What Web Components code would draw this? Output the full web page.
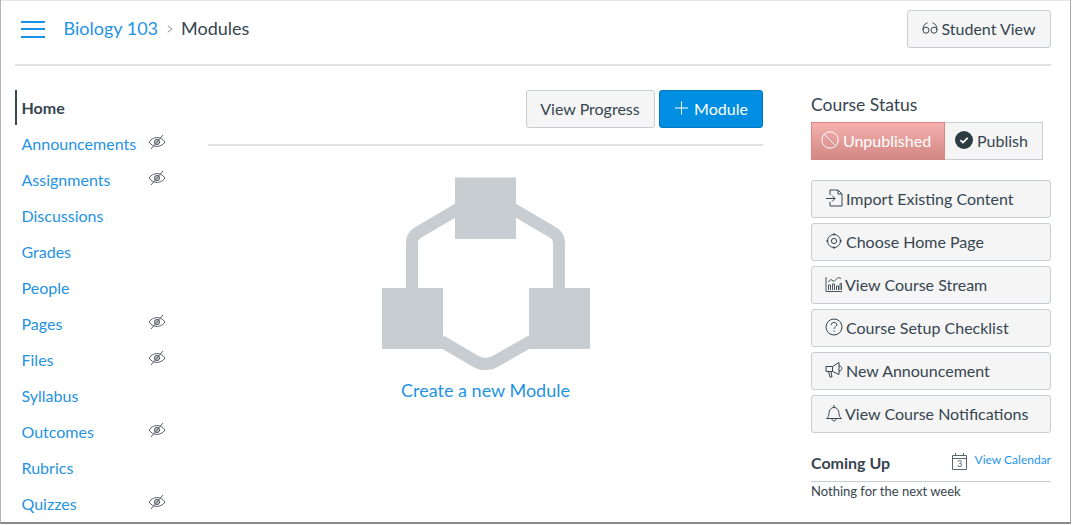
<!DOCTYPE html>
<html>
<head>
<meta charset="utf-8">
<title>Modules</title>
<style>
  html, body { margin: 0; padding: 0; background: #fff; }
  body { font-family: Lato, "Open Sans", sans-serif; color: #364550; width: 1072px; height: 525px; overflow: hidden; }
</style>
</head>
<body>
<course-window>
  <course-header></course-header>
  <div style="display:flex">
    <course-nav></course-nav>
    <modules-main></modules-main>
    <course-aside></course-aside>
  </div>
</course-window>

<script>
const icons = {
  glasses: '<svg width="16" height="12" viewBox="0 0 16 12" fill="none" stroke="currentColor" stroke-width="1"><circle cx="4" cy="8.200" r="3"/><circle cx="12" cy="8.200" r="3"/><path d="M1 8C1 4.500 2.500 1.500 5.500 .8M15 8C15 4.500 13.500 1.500 10.500 .8"/></svg>',
  eye: '<svg width="18" height="16" viewBox="0 0 18 16" fill="none" stroke="#5a6369" stroke-width="1"><path d="M1 8c2-3 5-4.400 8-4.400S15 5 17 8c-2 3-5 4.400-8 4.400S3 11 1 8z"/><circle cx="9" cy="8" r="2.600" fill="#5a6369" fill-opacity=".4"/><path d="M3 15L15 1"/></svg>',
  ban: '<svg width="18" height="18" viewBox="0 0 18 18" fill="none" stroke="currentColor" stroke-width="1"><circle cx="9" cy="9" r="8.200"/><path d="M3.200 3.200l11.600 11.600"/></svg>',
  check: '<svg width="18" height="18" viewBox="0 0 18 18"><circle cx="9" cy="9" r="9" fill="#2d3b45"/><path d="M5.400 9.200l2.500 2.400 4.800-4.800" fill="none" stroke="#fff" stroke-width="1.800"/></svg>',
  plus: '<svg width="14" height="14" viewBox="0 0 14 14" stroke="currentColor" stroke-width="1"><path d="M6.500 .5v13M0 7h13"/></svg>',
  importFile: '<svg width="18" height="18" viewBox="0 0 18 18" fill="none" stroke="currentColor" stroke-width="1"><path d="M5 6V1h8l4 4v12H5v-4"/><path d="M13 1v4h4M1 9.500h9M7 6.500l3 3-3 3"/></svg>',
  target: '<svg width="18" height="18" viewBox="0 0 18 18" fill="none" stroke="currentColor" stroke-width="1"><circle cx="9" cy="9" r="6.500"/><circle cx="9" cy="9" r="2.600"/><path d="M9 1v2.400M9 14.600V17M1 9h2.400M14.600 9H17"/></svg>',
  stream: '<svg width="18" height="18" viewBox="0 0 18 18" fill="none" stroke="currentColor" stroke-width=".9" style="margin-right:-1px"><path d="M1 2v14.500h16"/><path d="M3.500 15v-5h2v5M7.500 15V9h2v6M11.500 15v-4h2v4M15 15V8.500h1.500V15M3 7l3-2.500 3 2 4-4 3 1"/></svg>',
  help: '<svg width="18" height="18" viewBox="0 0 18 18" fill="none" stroke="currentColor" stroke-width="1"><circle cx="9" cy="9" r="8"/><path d="M6.400 7c0-1.600 1.200-2.600 2.700-2.600S11.800 5.400 11.800 6.800c0 2-2.700 2.100-2.700 4"/><path d="M9.100 12.400v1.300"/></svg>',
  megaphone: '<svg width="18" height="18" viewBox="0 0 18 18" fill="none" stroke="currentColor" stroke-width="1"><path d="M1 5.500h6.500L14 1.500v12L7.500 10.500H1z"/><path d="M14 5c1.800 0 2.800 1 2.800 2.500S15.800 10 14 10M3.500 10.500L5 16h2l-1-5.500M7.500 5.500v5"/></svg>',
  bell: '<svg width="18" height="18" viewBox="0 0 18 18" fill="none" stroke="currentColor" stroke-width="1" style="margin-right:-1px"><path d="M1.500 14.500c1.800-1.200 2.300-2.500 2.500-5 .2-3.500 2-6 5-6s4.800 2.500 5 6c.2 2.500.7 3.800 2.500 5z"/><path d="M9 1v2.500M7 14.800c0 1.200.9 2.200 2 2.200s2-1 2-2.200"/></svg>'
};

class CourseWindow extends HTMLElement {
  constructor() {
    super();
    this.attachShadow({ mode: 'open' });
    this.shadowRoot.innerHTML = `
      <style>
        :host {
          display: block;
          box-sizing: border-box;
          width: 1071px;
          height: 524px;
          background: #fff;
          border-left: 1px solid #b4b4b4;
          border-right: 1px solid #a8a8a8;
          border-bottom: 2px solid #8a8a8a;
          box-shadow: inset 0 1px 0 #e6e6e6;
          padding: 0 19px 0 14px;
          overflow: hidden;
        }
      </style>
      <slot></slot>
    `;
  }
}

class CourseHeader extends HTMLElement {
  constructor() {
    super();
    this.attachShadow({ mode: 'open' });
    this.shadowRoot.innerHTML = `
      <style>
        :host {
          display: flex;
          align-items: center;
          box-sizing: border-box;
          height: 66px;
          border-bottom: 2px solid #dfe3e6;
          padding-bottom: 6px;
        }
        .burger { width: 24px; height: 17px; margin-left: 6px; margin-right: 18.500px; display: flex; flex-direction: column; justify-content: space-between; }
        .burger i { display: block; height: 2px; background: #1a93e6; }
        nav { font-size: 18px; display: flex; align-items: center; position: relative; top: -1px; }
        a { color: #1f93e4; }
        .sep { margin: 1px 8px 0 9px; }
        .end { margin-left: auto; }
      </style>
      <div class="burger"><i></i><i></i><i></i></div>
      <nav><a>Biology 103</a><svg class="sep" width="6" height="8" viewBox="0 0 6 8" fill="none" stroke="#8a949a"><path d="M.8 .8L5 4 .8 7.200"/></svg><span>Modules</span></nav>
      <canvas-button class="end" style="width:144px">${icons.glasses}<span>Student View</span></canvas-button>
    `;
  }
}

class CanvasButton extends HTMLElement {
  constructor() {
    super();
    this.attachShadow({ mode: 'open' });
    this.shadowRoot.innerHTML = `
      <style>
        :host {
          display: inline-flex;
          align-items: center;
          justify-content: center;
          gap: 3px;
          box-sizing: border-box;
          height: 38px;
          padding-bottom: 2px;
          background: #f5f5f5;
          border: 1px solid #c7cdd1;
          border-radius: 3px;
          color: #364550;
          font-size: 16px;
          white-space: nowrap;
        }
        :host([primary]) { background: #008ee2; border-color: #0079c1; color: #fff; }
        :host([start]) { justify-content: flex-start; padding-left: 13px; }
      </style>
      <slot></slot>
    `;
  }
}

class CourseNav extends HTMLElement {
  constructor() {
    super();
    this.attachShadow({ mode: 'open' });
    const items = [
      ['Home', 0], ['Announcements', 1], ['Assignments', 1], ['Discussions', 0], ['Grades', 0], ['People', 0],
      ['Pages', 1], ['Files', 1], ['Syllabus', 0], ['Outcomes', 1], ['Rubrics', 0], ['Quizzes', 1]
    ];
    const rows = items.map(([label, hidden], i) => `
      <div class="row${i === 0 ? ' active' : ''}"><span>${label}</span>${hidden ? `<b>${icons.eye}</b>` : ''}</div>`).join('');
    this.shadowRoot.innerHTML = `
      <style>
        :host { display: block; flex: none; width: 193px; padding-top: 24px; font-size: 16px; }
        .row { position: relative; display: flex; align-items: center; height: 36px; padding: 0 0 2px 6.500px; color: #1f93e4; box-sizing: border-box; }
        .active { color: #364550; font-weight: 700; border-left: 2px solid #3a4852; padding-left: 4.500px; height: 35px; margin-bottom: 1px; padding-bottom: 1px; }
        b { position: absolute; left: 133px; top: 8px; display: block; height: 16px; }
      </style>
      ${rows}
    `;
  }
}

class ModulesMain extends HTMLElement {
  constructor() {
    super();
    this.attachShadow({ mode: 'open' });
    this.shadowRoot.innerHTML = `
      <style>
        :host { display: block; flex: none; width: 555px; padding-top: 24px; }
        .tools { display: flex; justify-content: flex-end; gap: 4px; padding-bottom: 16px; border-bottom: 2px solid #dfe3e6; }
        .empty { display: flex; flex-direction: column; align-items: center; padding-top: 31px; }
        svg { display: block; margin-left: 1px; }
        a { color: #1f93e4; font-size: 18px; line-height: 24px; }
      </style>
      <div class="tools">
        <canvas-button style="width:129px;padding-right:1px">View Progress</canvas-button>
        <canvas-button primary style="width:104px;gap:5px">${icons.plus}<span>Module</span></canvas-button>
      </div>
      <div class="empty">
        <svg width="210" height="201" viewBox="381 177 210 201">
          <g fill="none" stroke="#c7cdd1" stroke-width="12">
            <path d="M412 290V243q0-7 6-10.500L458 209"/>
            <path d="M559 290V243q0-7-6-10.500L513 209"/>
            <path d="M441 341L475 361q10.500 6 21 0L531 341"/>
          </g>
          <g fill="#c7cdd1">
            <rect x="455" y="177.500" width="61" height="61.500"/>
            <rect x="382" y="288" width="61" height="61"/>
            <rect x="529" y="288" width="61" height="61"/>
          </g>
        </svg>
        <a>Create a new Module</a>
      </div>
    `;
  }
}

class CourseAside extends HTMLElement {
  constructor() {
    super();
    this.attachShadow({ mode: 'open' });
    const actions = [
      [icons.importFile, 'Import Existing Content'],
      [icons.target, 'Choose Home Page'],
      [icons.stream, 'View Course Stream'],
      [icons.help, 'Course Setup Checklist'],
      [icons.megaphone, 'New Announcement'],
      [icons.bell, 'View Course Notifications']
    ].map(([icon, label]) => `<canvas-button start>${icon}<span>${label}</span></canvas-button>`).join('');
    this.shadowRoot.innerHTML = `
      <style>
        :host { display: block; flex: none; width: 240px; margin-left: 48px; padding-top: 28px; font-size: 16px; }
        h2 { font-size: 17.500px; font-weight: 400; line-height: 22px; margin: 0 0 6px; }
        .status { display: flex; height: 38px; width: 232px; box-sizing: border-box; }
        .off, .pub { display: flex; align-items: center; justify-content: center; gap: 4px; box-sizing: border-box; padding: 0 4px 2px 0; }
        .off { width: 134px; background: linear-gradient(#f5b0ad, #d28885); color: #fff; border: 1px solid #d88785; }
        .pub { flex: 1; background: #f5f5f5; border: 1px solid #c7cdd1; border-left: 0; }
        .actions { display: flex; flex-direction: column; gap: 5px; margin-top: 20px; }
        .head { display: flex; align-items: flex-end; margin-top: 18px; padding-bottom: 9px; border-bottom: 1px solid #c7cdd1; height: 21px; }
        .head strong { font-size: 16px; font-weight: 700; flex: 1; }
        .cal { display: flex; align-items: center; gap: 8px; font-size: 12px; color: #1f93e4; position: relative; top: -4px; }
        .cal svg { position: relative; top: 2px; }
        p { margin: 1px 0 0; font-size: 13px; line-height: 16px; }
      </style>
      <h2>Course Status</h2>
      <div class="status">
        <div class="off">${icons.ban}<span>Unpublished</span></div>
        <div class="pub">${icons.check}<span>Publish</span></div>
      </div>
      <div class="actions">${actions}</div>
      <div class="head">
        <strong>Coming Up</strong>
        <span class="cal">
          <svg width="15" height="17" viewBox="0 0 15 17" fill="none" stroke="#5b666d"><path d="M.5 2.500h14v14H.500zM.5 5.500h14M3.500 0v3M11.500 0v3"/><text x="7.500" y="14.200" text-anchor="middle" font-size="9" font-family="Lato" fill="#5b666d" stroke="none">3</text></svg>
          View Calendar
        </span>
      </div>
      <p>Nothing for the next week</p>
    `;
  }
}

customElements.define('course-window', CourseWindow);
customElements.define('course-header', CourseHeader);
customElements.define('canvas-button', CanvasButton);
customElements.define('course-nav', CourseNav);
customElements.define('modules-main', ModulesMain);
customElements.define('course-aside', CourseAside);
</script>
</body>
</html>
